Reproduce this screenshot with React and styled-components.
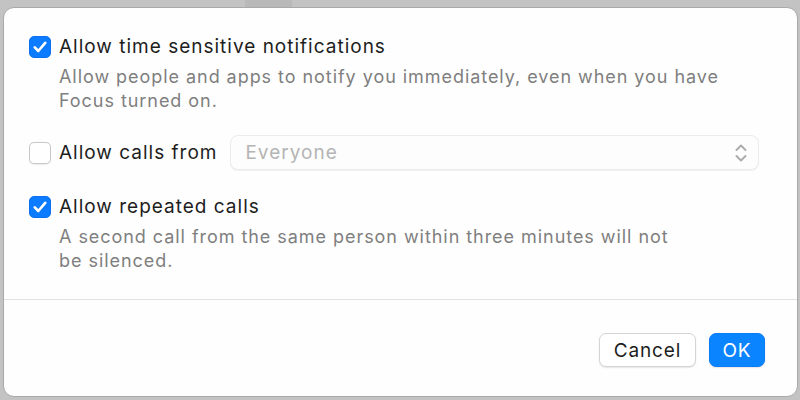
import React from 'react';
import styled, { createGlobalStyle } from 'styled-components';

const GlobalStyle = createGlobalStyle`
  html, body {
    margin: 0;
    padding: 0;
    background: #c3c3c3;
  }
  body {
    font-family: Inter, "Liberation Sans", Arial, sans-serif;
    -webkit-font-smoothing: antialiased;
  }
`;

const Backdrop = styled.div`
  width: 800px;
  height: 400px;
  box-sizing: border-box;
  padding: 7px 2px 3px 3px;
  background:
    linear-gradient(#b9b9b9, #b9b9b9) 245px 0 / 47px 7px no-repeat,
    #c3c3c3;
`;

const Dialog = styled.div`
  height: 100%;
  box-sizing: border-box;
  display: flex;
  flex-direction: column;
  background: #fefefe;
  border: 1px solid #a9a9a9;
  border-radius: 11px;
`;

const Body = styled.div`
  display: flex;
  flex-direction: column;
  padding: 27px 38px 26px 25px;
  border-bottom: 1px solid #e2e2e2;
`;

const Option = styled.div`
  display: grid;
  grid-template-columns: 22px 1fr;
  column-gap: 8px;
  align-items: center;
  margin-top: ${(p) => p.$gap || 0}px;
`;

const Box = styled.span`
  width: 22px;
  height: 22px;
  box-sizing: border-box;
  border-radius: 5px;
  display: flex;
  align-items: center;
  justify-content: center;
  background: ${(p) => (p.$checked ? '#0b7bff' : '#ffffff')};
  border: 1px solid ${(p) => (p.$checked ? '#0a72ee' : '#c9c9c9')};
  box-shadow: ${(p) => (p.$checked ? 'none' : '0 0.5px 1px rgba(0,0,0,0.08)')};
`;

const Title = styled.span`
  font-size: 19px;
  line-height: 24px;
  color: #1d1d1d;
  letter-spacing: 1px;
  white-space: nowrap;
`;

const Desc = styled.p`
  grid-column: 2;
  margin: 6px 0 0;
  font-size: 18px;
  line-height: 24px;
  color: #7f7f7f;
  letter-spacing: 0.95px;
  white-space: nowrap;
`;

const Inline = styled.div`
  display: flex;
  align-items: center;
  gap: 13px;
`;

const Select = styled.div`
  flex: 1;
  height: 35px;
  box-sizing: border-box;
  display: flex;
  align-items: center;
  justify-content: space-between;
  padding: 0 10px 0 14px;
  background: #fdfdfd;
  border: 1px solid #ececec;
  border-radius: 8px;
  box-shadow: 0 1px 1px rgba(0, 0, 0, 0.06);
  font-size: 19px;
  letter-spacing: 1px;
  color: #b4b4b4;
`;

const Footer = styled.div`
  display: flex;
  justify-content: flex-end;
  gap: 13px;
  padding: 33px 32px 0 0;
`;

const Button = styled.button`
  height: 34px;
  padding: 0 ${(p) => (p.$primary ? 10 : 12)}px;
  min-width: ${(p) => (p.$primary ? 56 : 97)}px;
  border-radius: 7px;
  font-family: inherit;
  font-size: 19px;
  letter-spacing: 0.9px;
  color: ${(p) => (p.$primary ? '#ffffff' : '#1d1d1d')};
  background: ${(p) => (p.$primary ? '#0b84ff' : '#ffffff')};
  border: 1px solid ${(p) => (p.$primary ? '#0b7df5' : '#d4d4d4')};
  box-shadow: 0 1px 1.5px rgba(0, 0, 0, 0.1);
`;

const Check = () => (
  <svg width="14" height="12" viewBox="0 0 14 12">
    <path d="M1.8 6.4 L5.3 10 L12.2 1.8" fill="none" stroke="#fff" strokeWidth="2.6" strokeLinecap="round" strokeLinejoin="round" />
  </svg>
);

const Chevrons = () => (
  <svg width="14" height="20" viewBox="0 0 14 20">
    <path d="M2.5 7 L7 2.5 L11.5 7 M2.5 13 L7 17.5 L11.5 13" fill="none" stroke="#acacac" strokeWidth="2" strokeLinecap="round" strokeLinejoin="round" />
  </svg>
);

const Checkbox = ({ checked }) => <Box $checked={checked}>{checked && <Check />}</Box>;

const App = () => (
  <Backdrop>
    <GlobalStyle />
    <Dialog>
      <Body>
        <Option>
          <Checkbox checked />
          <Title>Allow time sensitive notifications</Title>
          <Desc>
            Allow people and apps to notify you immediately, even when you have
            <br />
            Focus turned on.
          </Desc>
        </Option>
        <Option $gap={22}>
          <Checkbox />
          <Inline>
            <Title>Allow calls from</Title>
            <Select>
              Everyone
              <Chevrons />
            </Select>
          </Inline>
        </Option>
        <Option $gap={25}>
          <Checkbox checked />
          <Title>Allow repeated calls</Title>
          <Desc>
            A second call from the same person within three minutes will not
            <br />
            be silenced.
          </Desc>
        </Option>
      </Body>
      <Footer>
        <Button>Cancel</Button>
        <Button $primary>OK</Button>
      </Footer>
    </Dialog>
  </Backdrop>
);

export default App;
